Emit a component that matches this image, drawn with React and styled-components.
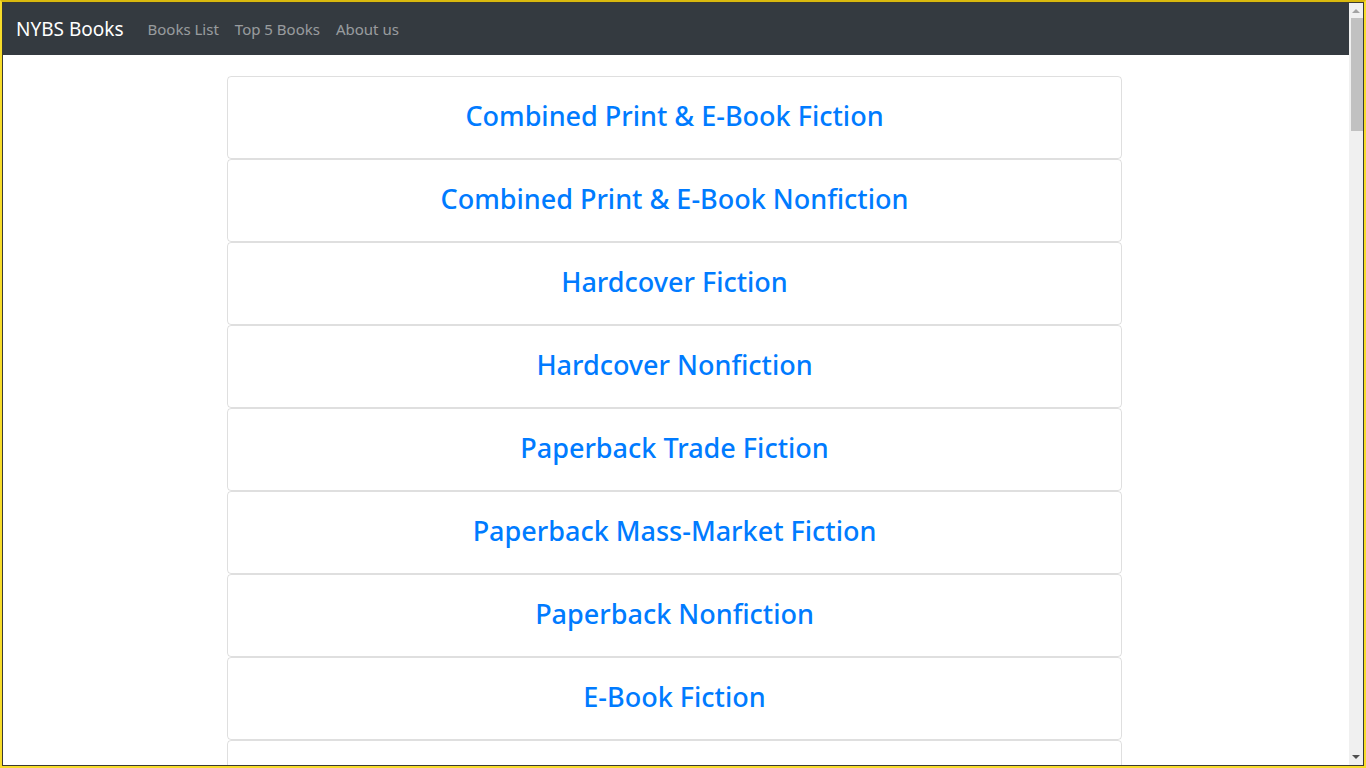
import React from "react";
import styled, { createGlobalStyle } from "styled-components";

const lists = [
  "Combined Print & E-Book Fiction",
  "Combined Print & E-Book Nonfiction",
  "Hardcover Fiction",
  "Hardcover Nonfiction",
  "Paperback Trade Fiction",
  "Paperback Mass-Market Fiction",
  "Paperback Nonfiction",
  "E-Book Fiction",
  "E-Book Nonfiction",
];

const App = () => {
  return (
    <>
      <GlobalStyle />
      <Frame>
        <Window>
          <Page>
            <Navbar>
              <Brand href="#">NYBS Books</Brand>
              <NavLink href="#">Books List</NavLink>
              <NavLink href="#">Top 5 Books</NavLink>
              <NavLink href="#">About us</NavLink>
            </Navbar>
            <ListContainer>
              {lists.map((name) => (
                <Card key={name}>
                  <CardTitle href="#">{name}</CardTitle>
                </Card>
              ))}
            </ListContainer>
          </Page>
          <Scrollbar>
            <Arrow $up />
            <Thumb />
            <Track />
            <Arrow />
          </Scrollbar>
        </Window>
      </Frame>
    </>
  );
};

export default App;

const GlobalStyle = createGlobalStyle`
  html, body {
    margin: 0;
    padding: 0;
    overflow: hidden;
    background: #fff;
  }
  body {
    font-family: "Noto Sans", "Open Sans", sans-serif;
  }
  * {
    box-sizing: border-box;
  }
`;

const Frame = styled.div`
  width: 1366px;
  height: 768px;
  border: 2px solid #f7dc2a;
  border-top-color: #d9b90e;
  display: flex;
`;

const Window = styled.div`
  flex: 1;
  display: flex;
  border: 1px solid #3b3a33;
  overflow: hidden;
`;

const Page = styled.div`
  flex: 1;
  overflow: hidden;
  background: #fff;
`;

const Navbar = styled.nav`
  height: 52px;
  background: #343a40;
  display: flex;
  align-items: center;
  padding: 0 13px 1px;
`;

const Brand = styled.a`
  color: #fff;
  font-size: 19px;
  text-decoration: none;
  margin-right: 16px;
`;

const NavLink = styled.a`
  color: rgba(255, 255, 255, 0.5);
  font-size: 15px;
  text-decoration: none;
  padding: 0 8px;
`;

const ListContainer = styled.div`
  width: 895px;
  margin: 21px 0 0 224px;
  display: flex;
  flex-direction: column;
`;

const Card = styled.div`
  height: 83px;
  flex-shrink: 0;
  border: 1px solid rgba(0, 0, 0, 0.125);
  border-radius: 4px;
  display: flex;
  align-items: center;
  justify-content: center;
  padding-bottom: 2px;
`;

const CardTitle = styled.a`
  color: #007bff;
  font-size: 27px;
  font-weight: 500;
  line-height: 1.2;
  text-decoration: none;
`;

const Scrollbar = styled.div`
  width: 14px;
  background: #f0f0f0;
  display: flex;
  flex-direction: column;
  align-items: center;
`;

const Arrow = styled.div`
  width: 0;
  height: 0;
  margin: ${(p) => (p.$up ? "6px 0 5px" : "5px 0 6px")};
  border-left: 4px solid transparent;
  border-right: 4px solid transparent;
  ${(p) =>
    p.$up
      ? "border-bottom: 4px solid #a3a3a3;"
      : "border-top: 4px solid #505050;"}
`;

const Thumb = styled.div`
  width: 12px;
  height: 113px;
  margin-left: 2px;
  background: #c1c1c1;
`;

const Track = styled.div`
  flex: 1;
`;
